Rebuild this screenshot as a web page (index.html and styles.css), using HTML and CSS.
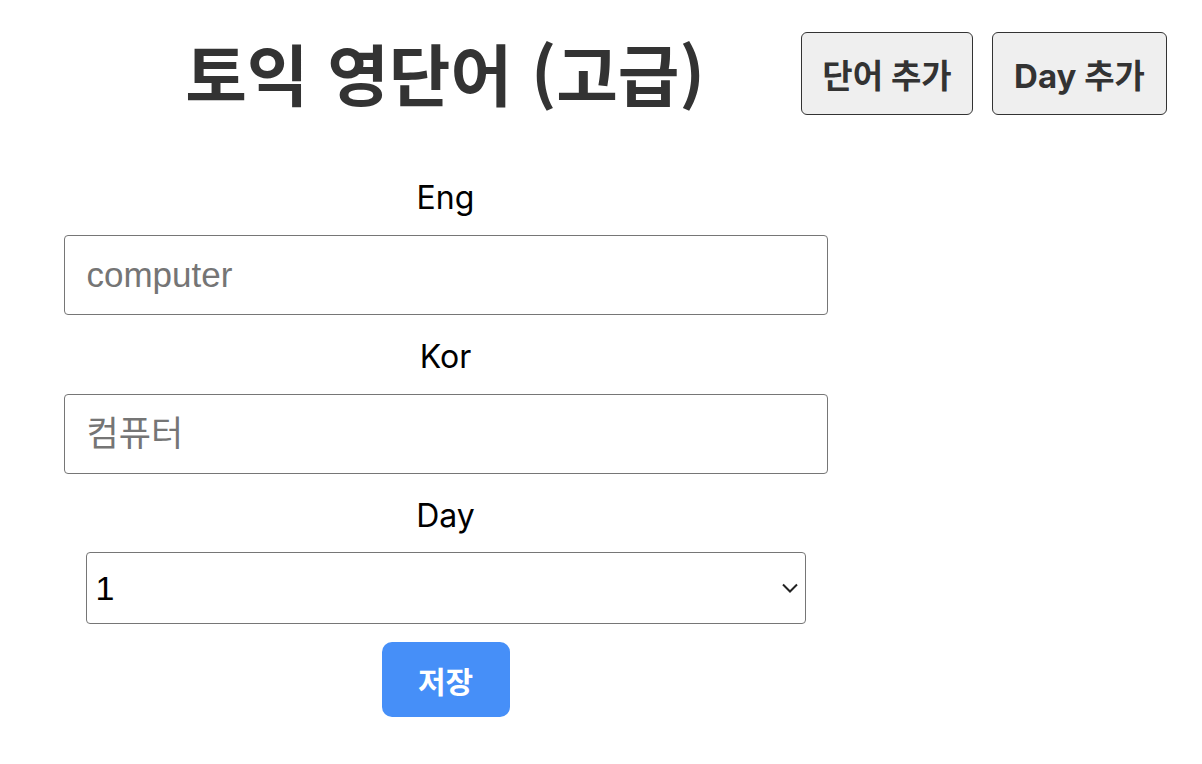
FILE: index.html
```html
<!DOCTYPE html>
<html lang="ko">
<head>
<meta charset="utf-8">
<title>토익 영단어 (고급)</title>
<link rel="stylesheet" href="styles.css">
</head>
<body>
<div class="app">
  <header class="header">
    <h1 class="title">토익 영단어 (고급)</h1>
    <div class="menu">
      <button class="link-btn" type="button">단어 추가</button>
      <button class="link-btn" type="button">Day 추가</button>
    </div>
  </header>
  <form class="word-form">
    <div class="field">
      <label class="field-label">Eng</label>
      <input class="text-input" type="text" placeholder="computer">
    </div>
    <div class="field">
      <label class="field-label">Kor</label>
      <input class="text-input" type="text" placeholder="컴퓨터">
    </div>
    <div class="field">
      <label class="field-label">Day</label>
      <div class="select-wrap">
        <select class="day-select">
          <option>1</option>
        </select>
        <svg class="chevron" width="16" height="10" viewBox="0 0 16 10"><path d="M1 1.5 L8 8.5 L15 1.5" fill="none" stroke="#222" stroke-width="2"/></svg>
      </div>
    </div>
    <button class="save-btn" type="button">저장</button>
  </form>
</div>
</body>
</html>
```

FILE: styles.css
```css
html, body {
  margin: 0;
  padding: 0;
  background: #fff;
}
body {
  font-family: "Liberation Sans", Arial, "Noto Sans CJK KR", sans-serif;
  color: #000;
}
.app {
  width: 1202px;
}
.header {
  display: flex;
  align-items: flex-start;
  padding-left: 89px;
  padding-top: 32px;
  height: 110px;
  box-sizing: border-box;
}
.title {
  width: 712px;
  margin: 0;
  text-align: center;
  font-family: "Noto Sans CJK KR", "Noto Sans", sans-serif;
  font-weight: 700;
  font-size: 67px;
  line-height: 86px;
  color: #333;
  margin-top: -3px;
}
.menu {
  display: flex;
  gap: 19px;
}
.link-btn {
  height: 83px;
  padding: 0;
  border: 1px solid #333;
  border-radius: 6px;
  background: #efefef;
  color: #333;
  font-family: "Inter", "Noto Sans CJK KR", sans-serif;
  font-weight: 700;
  font-size: 33px;
  cursor: pointer;
}
.link-btn:first-child {
  width: 172px;
}
.link-btn:last-child {
  width: 175px;
}
.word-form {
  width: 891px;
  display: flex;
  flex-direction: column;
  align-items: center;
  padding-top: 69px;
}
.field {
  display: flex;
  flex-direction: column;
  align-items: center;
  margin-bottom: 23px;
}
.field-label {
  font-family: "Inter", "Liberation Sans", sans-serif;
  font-size: 32px;
  line-height: 38px;
  margin-bottom: 18px;
}
.text-input {
  width: 764px;
  height: 80px;
  box-sizing: border-box;
  border: 1px solid #767676;
  border-radius: 4px;
  padding: 0 22px;
  font-family: "Liberation Sans", "Noto Sans CJK KR", sans-serif;
  font-size: 35px;
  color: #000;
  outline: none;
}
.text-input::placeholder {
  color: #757575;
}
.select-wrap {
  position: relative;
  width: 720px;
  height: 72px;
  margin-top: -1px;
}
.day-select {
  width: 720px;
  height: 72px;
  box-sizing: border-box;
  border: 1px solid #767676;
  border-radius: 4px;
  background: #fff;
  padding: 0 9px;
  font-family: "Liberation Sans", sans-serif;
  font-size: 34px;
  color: #000;
  appearance: none;
  -webkit-appearance: none;
  outline: none;
}
.chevron {
  position: absolute;
  right: 8px;
  top: 31px;
  pointer-events: none;
}
.field:last-of-type {
  margin-bottom: 18px;
}
.save-btn {
  width: 128px;
  height: 75px;
  border: none;
  border-radius: 10px;
  background: #468ff8;
  color: #fff;
  font-family: "Noto Sans CJK KR", sans-serif;
  font-weight: 700;
  font-size: 30px;
  cursor: pointer;
}
```
